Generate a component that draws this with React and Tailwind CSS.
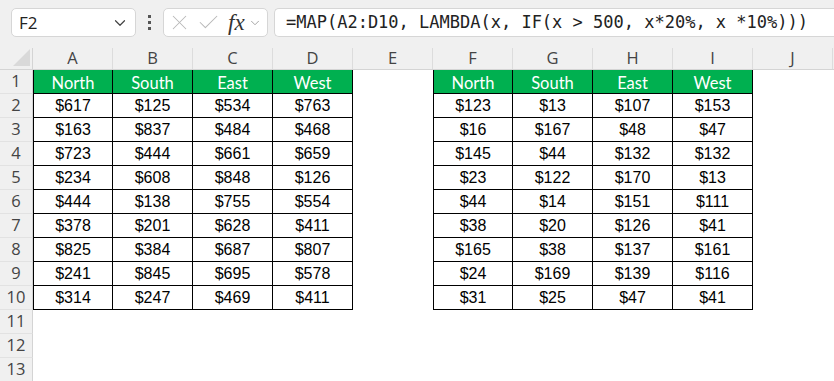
import { ChevronDown, X, Check } from "lucide-react";

const cols = ["A", "B", "C", "D", "E", "F", "G", "H", "I", "J"];
const heads = ["North", "South", "East", "West"];

const left = [
  ["$617", "$125", "$534", "$763"],
  ["$163", "$837", "$484", "$468"],
  ["$723", "$444", "$661", "$659"],
  ["$234", "$608", "$848", "$126"],
  ["$444", "$138", "$755", "$554"],
  ["$378", "$201", "$628", "$411"],
  ["$825", "$384", "$687", "$807"],
  ["$241", "$845", "$695", "$578"],
  ["$314", "$247", "$469", "$411"],
];

const right = [
  ["$123", "$13", "$107", "$153"],
  ["$16", "$167", "$48", "$47"],
  ["$145", "$44", "$132", "$132"],
  ["$23", "$122", "$170", "$13"],
  ["$44", "$14", "$151", "$111"],
  ["$38", "$20", "$126", "$41"],
  ["$165", "$38", "$137", "$161"],
  ["$24", "$169", "$139", "$116"],
  ["$31", "$25", "$47", "$41"],
];

function Cell({ value, head, first, blank }) {
  if (blank) return <div className="w-[80px] h-full shrink-0" />;
  return (
    <div
      className={`w-[80px] h-full shrink-0 flex items-center justify-center border-r border-b border-black ${
        first ? "border-l" : ""
      } ${
        head
          ? "bg-[#00b050] text-white pt-[3px] font-['Lato','Open_Sans',sans-serif] text-[16.5px]"
          : "bg-white text-black font-['Liberation_Sans',Arial,sans-serif] text-[16px]"
      }`}
    >
      {value}
    </div>
  );
}

function Row({ n, children }) {
  return (
    <div className="flex h-[24px]">
      <div className="w-[33px] shrink-0 h-full bg-[#f0f0f0] border-r border-b border-b-[#e2e2e2] border-r-[#d4d4d4] text-[#444] flex items-center justify-center font-['Open_Sans',sans-serif] text-[16.5px]">
        {n}
      </div>
      {children}
    </div>
  );
}

export default function App() {
  const rows = [];
  for (let r = 1; r <= 13; r++) {
    let cells;
    if (r === 1) {
      cells = [
        ...heads.map((h, i) => <Cell key={"a" + i} value={h} head first={i === 0} />),
        <Cell key="e" blank />,
        ...heads.map((h, i) => <Cell key={"f" + i} value={h} head first={i === 0} />),
      ];
    } else if (r <= 10) {
      cells = [
        ...left[r - 2].map((v, i) => <Cell key={"a" + i} value={v} first={i === 0} />),
        <Cell key="e" blank />,
        ...right[r - 2].map((v, i) => <Cell key={"f" + i} value={v} first={i === 0} />),
      ];
    } else {
      cells = null;
    }
    rows.push(
      <Row key={r} n={r}>
        {cells}
      </Row>
    );
  }

  return (
    <div className="w-[834px] h-[381px] overflow-hidden bg-white flex flex-col">
      {/* Formula bar */}
      <div className="h-[48px] shrink-0 bg-[#f0f0f0] flex items-start pt-[8px] pl-[11px]">
        <div className="w-[125px] h-[29px] bg-white border border-[#d6d6d6] rounded-[5px] flex items-center justify-between pl-[7px] pr-[6px] font-['Open_Sans',sans-serif] text-[17px] text-[#222]">
          <span>F2</span>
          <ChevronDown size={18} strokeWidth={1.6} className="text-[#444]" />
        </div>
        <div className="w-[27px] h-[29px] flex flex-col items-center justify-center gap-[3px]">
          <span className="w-[3px] h-[3px] bg-[#555]" />
          <span className="w-[3px] h-[3px] bg-[#555]" />
          <span className="w-[3px] h-[3px] bg-[#555]" />
        </div>
        <div className="w-[105px] h-[29px] bg-white border border-[#d6d6d6] rounded-[5px] flex items-center pl-[3px] pr-[2px]">
          <X size={25} strokeWidth={1} className="text-[#b8b8b8]" />
          <Check size={25} strokeWidth={1} className="text-[#b8b8b8] ml-[4px]" />
          <span className="ml-[7px] font-['Liberation_Serif',serif] italic text-[23px] text-[#333] leading-none">
            fx
          </span>
          <ChevronDown size={14} strokeWidth={1.5} className="text-[#999] ml-[3px]" />
        </div>
        <div className="ml-[6px] flex-1 h-[29px] bg-white border border-[#d6d6d6] border-r-0 rounded-l-[5px] flex items-center pl-[11px] font-['DejaVu_Sans_Mono','Liberation_Mono',monospace] text-[17px] text-[#222] whitespace-nowrap">
          =MAP(A2:D10, LAMBDA(x, IF(x &gt; 500, x*20%, x *10%)))
        </div>
      </div>

      {/* Column headers */}
      <div className="flex h-[22px] shrink-0 bg-[#f0f0f0] border-b border-[#d4d4d4]">
        <div className="w-[33px] shrink-0 h-full relative border-r border-[#d4d4d4]">
          <div className="absolute right-[2px] bottom-[3px] w-0 h-0 border-l-[17px] border-l-transparent border-b-[17px] border-b-[#d9d9d9]" />
        </div>
        {cols.map((c) => (
          <div
            key={c}
            className="w-[80px] shrink-0 h-full flex items-center justify-center border-r border-[#dcdcdc] text-[#444] font-['Open_Sans',sans-serif] text-[16.5px]"
          >
            {c}
          </div>
        ))}
      </div>

      {rows}
    </div>
  );
}
